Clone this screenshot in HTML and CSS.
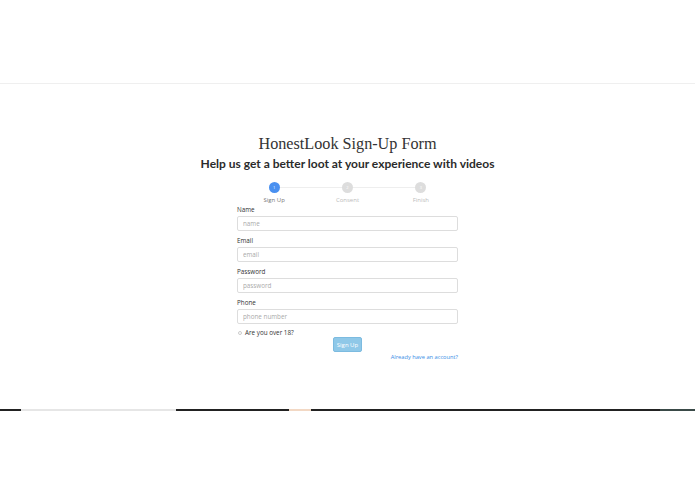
FILE: index.html
```html
<!DOCTYPE html>
<html>
<head>
<meta charset="utf-8">
<link rel="stylesheet" href="styles.css">
</head>
<body>
<div class="page">
  <div class="topbar"></div>
  <main class="main">
    <h1 class="title">HonestLook Sign-Up Form</h1>
    <h2 class="subtitle">Help us get a better loot at your experience with videos</h2>
    <div class="stepper">
      <div class="step active"><span class="dot">1</span><span class="step-label">Sign Up</span></div>
      <div class="step"><span class="dot">2</span><span class="step-label">Consent</span></div>
      <div class="step"><span class="dot">3</span><span class="step-label">Finish</span></div>
    </div>
    <form class="form">
      <label class="field"><span class="label">Name</span><input class="input" placeholder="name"></label>
      <label class="field"><span class="label">Email</span><input class="input" placeholder="email"></label>
      <label class="field"><span class="label">Password</span><input class="input" placeholder="password"></label>
      <label class="field"><span class="label">Phone</span><input class="input" placeholder="phone number"></label>
      <label class="check"><span class="box"></span>Are you over 18?</label>
      <div class="actions"><button type="button" class="btn">Sign Up</button></div>
      <div class="link-row"><a class="link" href="#">Already have an account?</a></div>
    </form>
  </main>
  <div class="bottombar">
    <span class="seg dark s1"></span>
    <span class="seg light s2"></span>
    <span class="seg dark s3"></span>
    <span class="seg orange s4"></span>
    <span class="seg dark s5"></span>
    <span class="seg teal s6"></span>
  </div>
</div>
</body>
</html>
```

FILE: styles.css
```css
* { box-sizing: border-box; }
html, body { margin: 0; padding: 0; background: #fff; }
body { font-family: "Open Sans", "Liberation Sans", sans-serif; color: #333; }
.page { width: 695px; height: 494px; display: flex; flex-direction: column; }
.topbar { height: 84px; border-bottom: 1px solid #efefef; flex: none; }
.main { height: 325px; flex: none; display: flex; flex-direction: column; align-items: center; padding-top: 50px; }
.title { margin: 0; font-family: "Liberation Serif", Georgia, serif; font-weight: normal; font-size: 16.2px; line-height: 20px; color: #333; }
.subtitle { margin: 0; font-family: "Lato", sans-serif; font-weight: 700; font-size: 12px; line-height: 20px; color: #2b2b2b; }
.stepper { width: 220px; display: flex; justify-content: space-between; margin-top: 8px; }
.step { flex: 1; display: flex; flex-direction: column; align-items: center; position: relative; }
.step + .step::before { content: ""; position: absolute; top: 5px; right: 50%; width: 100%; height: 1px; background: #eee; z-index: 0; }
.dot { position: relative; z-index: 1; width: 11px; height: 11px; border-radius: 50%; background: #ddd; color: #fff; font-size: 4px; line-height: 11px; text-align: center; }
.step.active .dot { background: #4a90f0; }
.step-label { margin-top: 3px; font-size: 6px; line-height: 8px; color: #bbb; }
.step.active .step-label { color: #777; }
.form { width: 221px; display: flex; flex-direction: column; margin-top: 1px; }
.field { display: flex; flex-direction: column; margin-bottom: 5px; }
.label { font-size: 6.3px; line-height: 9px; color: #333; margin-bottom: 2px; }
.input { height: 15px; border: 1px solid #ddd; border-radius: 2px; padding: 0 5px; font-family: "Open Sans", sans-serif; font-size: 6.3px; color: #333; outline: none; }
.input::placeholder { color: #aaa; }
.check { display: flex; align-items: center; font-size: 6.3px; line-height: 8px; color: #333; margin-top: 0; }
.box { width: 4px; height: 4px; border: 1px solid #ccc; border-radius: 50%; margin: 0 3px 0 1px; }
.actions { display: flex; justify-content: center; margin-top: 0; }
.btn { width: 29px; height: 15px; border: 1px solid #7cbbe0; border-radius: 2px; background: #8fc8e8; color: #fff; font-family: "Open Sans", sans-serif; font-size: 6px; padding: 0; }
.link-row { display: flex; justify-content: flex-end; margin-top: 1px; }
.link { color: #3a8ee6; text-decoration: none; font-size: 5.7px; line-height: 8px; }
.bottombar { height: 2px; display: flex; flex: none; }
.seg { height: 2px; display: block; }
.dark { background: #222; }
.light { background: #e6e6e6; }
.orange { background: #f2d8c4; }
.teal { background: #3a4a48; }
.s1 { width: 21px; }
.s2 { width: 155px; }
.s3 { width: 113px; }
.s4 { width: 22px; }
.s5 { width: 349px; }
.s6 { width: 35px; }
```
